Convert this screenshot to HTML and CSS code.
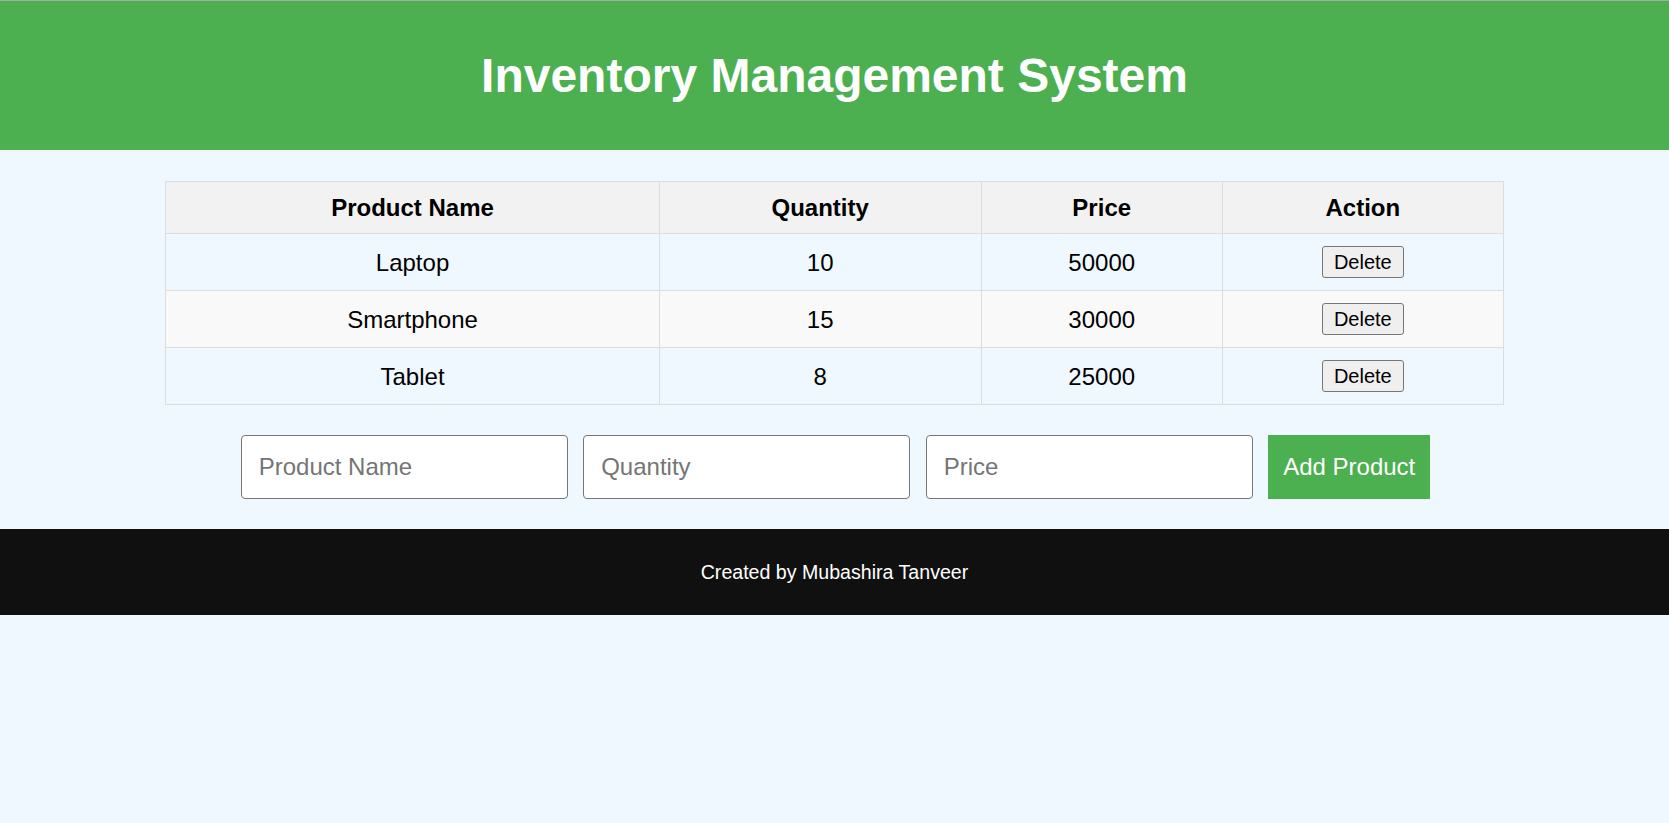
FILE: index.html
```html
<!DOCTYPE html>
<html lang="en">
<head>
<meta charset="utf-8">
<title>Inventory Management System</title>
<link rel="stylesheet" href="styles.css">
</head>
<body>
<header class="site-header">
  <h1 class="title">Inventory Management System</h1>
</header>
<main class="content">
  <table class="inventory">
    <thead>
      <tr>
        <th>Product Name</th>
        <th>Quantity</th>
        <th>Price</th>
        <th>Action</th>
      </tr>
    </thead>
    <tbody>
      <tr>
        <td>Laptop</td>
        <td>10</td>
        <td>50000</td>
        <td><button class="delete-btn" type="button">Delete</button></td>
      </tr>
      <tr>
        <td>Smartphone</td>
        <td>15</td>
        <td>30000</td>
        <td><button class="delete-btn" type="button">Delete</button></td>
      </tr>
      <tr>
        <td>Tablet</td>
        <td>8</td>
        <td>25000</td>
        <td><button class="delete-btn" type="button">Delete</button></td>
      </tr>
    </tbody>
  </table>
  <form class="add-form">
    <input class="field" type="text" placeholder="Product Name">
    <input class="field" type="number" placeholder="Quantity">
    <input class="field" type="number" placeholder="Price">
    <button class="add-btn" type="button">Add Product</button>
  </form>
</main>
<footer class="site-footer">
  <p class="credit">Created by Mubashira Tanveer</p>
</footer>
</body>
</html>
```

FILE: styles.css
```css
html, body {
  margin: 0;
  padding: 0;
}

body {
  font-family: "Liberation Sans", Arial, sans-serif;
  background: #f0f8ff;
  border-top: 1px solid #a8a8a8;
  color: #000;
}

.site-header {
  background: #4caf50;
  color: #fff;
  text-align: center;
  padding: 15px 0;
}

.title {
  margin: 32px 0;
  font-size: 48px;
  font-weight: bold;
  line-height: 55px;
}

.content {
  padding: 31px 0 30px;
}

.inventory {
  width: 80.2%;
  margin: 0 auto;
  border-collapse: collapse;
  font-size: 24px;
}

.inventory th,
.inventory td {
  border: 1px solid #ddd;
  padding: 12px;
  text-align: center;
  vertical-align: middle;
  line-height: 27px;
}

.inventory th {
  background: #f2f2f2;
  font-weight: bold;
}

.inventory tbody tr:nth-child(even) {
  background: #f9f9f9;
}

.delete-btn {
  font-family: "Liberation Sans", Arial, sans-serif;
  font-size: 20px;
  line-height: 24px;
  height: 32px;
  padding: 3px 11px;
  border: 1px solid #767676;
  border-radius: 3px;
  background: #efefef;
  color: #000;
  display: inline-block;
  vertical-align: middle;
}

.add-form {
  display: flex;
  justify-content: center;
  gap: 15.5px;
  margin-top: 30px;
  padding-left: 2px;
}

.field {
  box-sizing: border-box;
  width: 327px;
  height: 64px;
  padding: 0 17px;
  font-family: "Liberation Sans", Arial, sans-serif;
  font-size: 24px;
  border: 1px solid #767676;
  border-radius: 4px;
  background: #fff;
  color: #000;
}

.field::placeholder {
  color: #757575;
}

.field::-webkit-outer-spin-button,
.field::-webkit-inner-spin-button {
  -webkit-appearance: none;
  margin: 0;
}

.add-btn {
  box-sizing: border-box;
  height: 64px;
  padding: 0 15px;
  border: none;
  background: #4caf50;
  color: #fff;
  font-family: "Liberation Sans", Arial, sans-serif;
  font-size: 24px;
}

.site-footer {
  background: #111010;
  color: #fff;
  text-align: center;
  padding: 32px 0;
}

.credit {
  margin: 0;
  font-size: 19.6px;
  line-height: 22px;
}
```
